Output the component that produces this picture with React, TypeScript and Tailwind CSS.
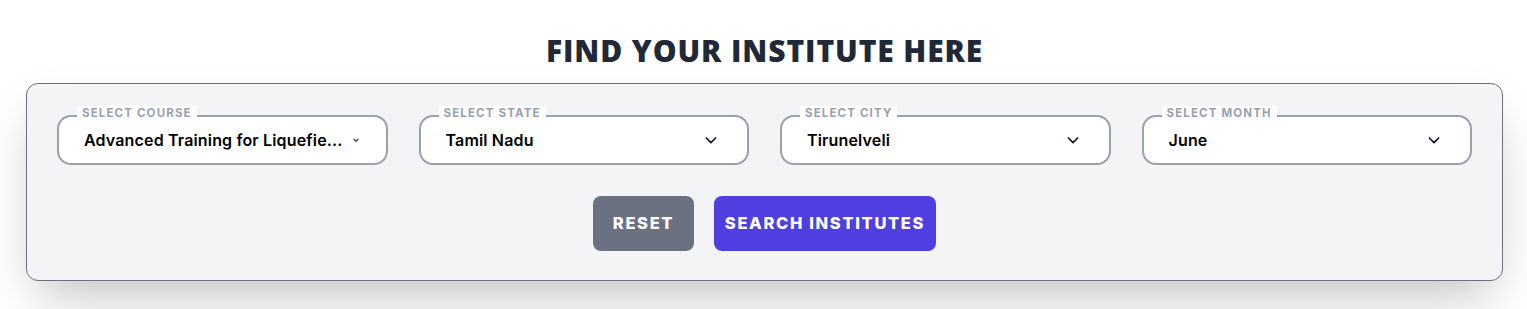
import React, { useState } from 'react';

type Field = {
    label: string;
    value: string;
    small?: boolean;
};

const fields: Field[] = [
    { label: 'Select Course', value: 'Advanced Training for Liquefie...', small: true },
    { label: 'Select State', value: 'Tamil Nadu' },
    { label: 'Select City', value: 'Tirunelveli' },
    { label: 'Select Month', value: 'June' },
];

function Chevron({ small }: { small?: boolean }) {
    if (small) {
        return (
            <svg className="w-[8px] h-[8px] text-gray-700" viewBox="0 0 10 10" fill="none" stroke="currentColor">
                <path strokeWidth={1.6} strokeLinecap="round" strokeLinejoin="round" d="M2.5 4l2.5 2.5L7.5 4" />
            </svg>
        );
    }
    return (
        <svg className="w-[16px] h-[16px] text-gray-900" viewBox="0 0 24 24" fill="none" stroke="currentColor">
            <path strokeWidth={2.5} strokeLinecap="round" strokeLinejoin="round" d="M5 9l7 7 7-7" />
        </svg>
    );
}

function SelectBox({ field }: { field: Field }) {
    return (
        <div className="relative">
            {/* Floating label */}
            <span className="absolute left-[20px] -top-[9px] px-[5px] bg-white text-[11.5px] leading-[14px] font-bold uppercase tracking-[0.1em] text-gray-400">
                {field.label}
            </span>
            <div className="h-[50px] flex items-center justify-between pl-[25px] pr-[28px] bg-white border-2 border-gray-400 rounded-[14px]">
                <span className="text-[16px] font-semibold text-black whitespace-nowrap tracking-[0.01em]">{field.value}</span>
                <span className={field.small ? 'ml-[6px] mr-[-2px]' : ''}>
                    <Chevron small={field.small} />
                </span>
            </div>
        </div>
    );
}

export default function App() {
    const [, setSearching] = useState(false);

    return (
        <div className="min-h-[309px] bg-white pt-[33px] pl-[26px] pr-[24px]" style={{ fontFamily: 'Inter, "Noto Sans", sans-serif' }}>
            {/* Header */}
            <h1
                className="text-center text-[30px] leading-[36px] font-extrabold text-[#1f2937] tracking-[0.03em]"
                style={{ fontFamily: '"Open Sans", "Noto Sans", sans-serif' }}
            >
                FIND YOUR INSTITUTE HERE
            </h1>

            {/* Search card */}
            <div className="mt-[14px] bg-[#f3f4f6] border border-gray-500 rounded-[12px] shadow-2xl px-[30px] pt-[31px] pb-[29px]">
                <div className="grid grid-cols-4 gap-x-[31px]">
                    {fields.map((field) => (
                        <SelectBox key={field.label} field={field} />
                    ))}
                </div>

                {/* Actions */}
                <div className="mt-[31px] flex justify-center gap-[20px]">
                    <button
                        onClick={() => setSearching(false)}
                        className="w-[101px] h-[55px] bg-gray-500 text-white rounded-[8px] text-[16.5px] font-extrabold tracking-[0.1em]"
                    >
                        RESET
                    </button>
                    <button
                        onClick={() => setSearching(true)}
                        className="w-[222px] h-[55px] bg-[#4f3fe0] text-white rounded-[8px] text-[16.5px] font-extrabold tracking-[0.1em]"
                    >
                        SEARCH INSTITUTES
                    </button>
                </div>
            </div>
        </div>
    );
}
